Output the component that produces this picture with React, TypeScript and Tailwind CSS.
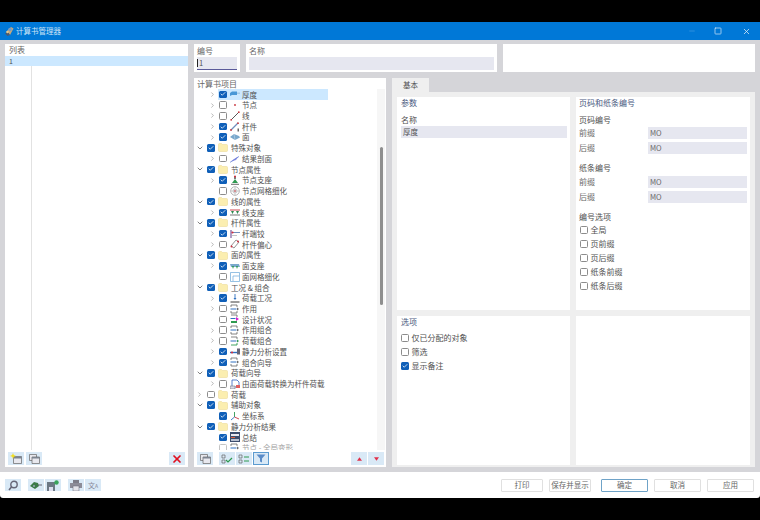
import React from 'react';
import { ChevronRight, ChevronDown, Check, Minus, Square, X } from 'lucide-react';

type TreeRow = { label: string; level: 0 | 1; arrow?: 'right' | 'down'; checked?: boolean; icon?: string; selected?: boolean; faded?: boolean };

const rows: TreeRow[] = [
    { label: '厚度', level: 1, arrow: 'right', checked: true, icon: 'thickness', selected: true },
    { label: '节点', level: 1, arrow: 'right', icon: 'node' },
    { label: '线', level: 1, arrow: 'right', icon: 'line' },
    { label: '杆件', level: 1, arrow: 'right', checked: true, icon: 'member' },
    { label: '面', level: 1, arrow: 'right', checked: true, icon: 'surface' },
    { label: '特殊对象', level: 0, arrow: 'down', checked: true },
    { label: '结果剖面', level: 1, arrow: 'right', icon: 'section' },
    { label: '节点属性', level: 0, arrow: 'down', checked: true },
    { label: '节点支座', level: 1, arrow: 'right', checked: true, icon: 'support' },
    { label: '节点网格细化', level: 1, icon: 'mesh' },
    { label: '线的属性', level: 0, arrow: 'down', checked: true },
    { label: '线支座', level: 1, arrow: 'right', checked: true, icon: 'lineSupport' },
    { label: '杆件属性', level: 0, arrow: 'down', checked: true },
    { label: '杆端铰', level: 1, arrow: 'right', checked: true, icon: 'hinge' },
    { label: '杆件偏心', level: 1, arrow: 'right', icon: 'eccentric' },
    { label: '面的属性', level: 0, arrow: 'down', checked: true },
    { label: '面支座', level: 1, arrow: 'right', checked: true, icon: 'surfaceSupport' },
    { label: '面网格细化', level: 1, icon: 'surfaceMesh' },
    { label: '工况 & 组合', level: 0, arrow: 'down', checked: true },
    { label: '荷载工况', level: 1, arrow: 'right', checked: true, icon: 'loadCase' },
    { label: '作用', level: 1, arrow: 'right', icon: 'action' },
    { label: '设计状况', level: 1, icon: 'design' },
    { label: '作用组合', level: 1, arrow: 'right', icon: 'action' },
    { label: '荷载组合', level: 1, arrow: 'right', icon: 'combo' },
    { label: '静力分析设置', level: 1, arrow: 'right', checked: true, icon: 'static' },
    { label: '组合向导', level: 1, arrow: 'right', checked: true, icon: 'action' },
    { label: '荷载向导', level: 0, arrow: 'down', checked: true },
    { label: '由面荷载转换为杆件荷载', level: 1, arrow: 'right', icon: 'convert' },
    { label: '荷载', level: 0, arrow: 'right' },
    { label: '辅助对象', level: 0, arrow: 'down', checked: true },
    { label: '坐标系', level: 1, checked: true, icon: 'axes' },
    { label: '静力分析结果', level: 0, arrow: 'down', checked: true },
    { label: '总结', level: 1, checked: true, icon: 'summary' },
    { label: '节点 - 全局变形', level: 1, icon: 'action', faded: true },
];

const TreeIcon: React.FC<{ name?: string }> = ({ name }) => {
    const common = { width: 10, height: 10, viewBox: '0 0 10 10', fill: 'none' };
    switch (name) {
        case 'thickness':
            return <svg {...common}><path d="M0 4l2-1.500h5v3.500H2L0 7z" fill="#4a97d6" /><path d="M7 3.500h3v1.500H7z" fill="#a8cce8" /></svg>;
        case 'node':
            return <svg {...common}><circle cx="5" cy="5" r="0.900" fill="#c8323c" /></svg>;
        case 'line':
            return <svg {...common}><path d="M1 9l8-8" stroke="#444" strokeWidth="0.900" /><circle cx="1.200" cy="8.800" r="0.900" fill="#c8323c" /><circle cx="8.800" cy="1.200" r="0.900" fill="#c8323c" /></svg>;
        case 'member':
            return <svg {...common}><path d="M1 8l7-7" stroke="#6f8fbc" strokeWidth="1.300" /><circle cx="1" cy="8" r="0.900" fill="#c8323c" /><circle cx="8" cy="1.200" r="0.900" fill="#c8323c" /><path d="M7.500 6.500h1.500v3H7.500z" fill="#666" /></svg>;
        case 'surface':
            return <svg {...common}><path d="M0 5l4-3 5 2 1 1.500-5 2.500z" fill="#7aa8cc" /><path d="M4 2l1 6" stroke="#c0d8ea" strokeWidth="0.600" /></svg>;
        case 'section':
            return <svg {...common}><path d="M0 8l4-3 5-3-3 4z" fill="#8f8fe8" /><path d="M0 8.500l9-6" stroke="#5f7fd0" strokeWidth="0.600" /></svg>;
        case 'support':
            return <svg {...common}><path d="M5 1v3" stroke="#444" strokeWidth="1.400" /><circle cx="5" cy="1.500" r="1" fill="#d03040" /><path d="M2 8l3-4 3 4z" fill="#2e9a50" /><path d="M1 9.300h8" stroke="#444" strokeWidth="0.800" /></svg>;
        case 'mesh':
            return <svg {...common}><circle cx="5" cy="5" r="4.300" stroke="#999" strokeWidth="0.700" /><circle cx="5" cy="5" r="2" stroke="#aaa" strokeWidth="0.600" /><path d="M0.700 5h8.600M5 0.700v8.600" stroke="#aaa" strokeWidth="0.500" /><circle cx="5" cy="5" r="0.800" fill="#c8323c" /></svg>;
        case 'lineSupport':
            return <svg {...common}><path d="M0 3h10" stroke="#c8323c" strokeWidth="0.900" /><path d="M1 4l1.500 3L4 4zM6 4l1.500 3L9 4z" fill="#2e8a50" /><path d="M0 8h10" stroke="#555" strokeWidth="0.800" /></svg>;
        case 'hinge':
            return <svg {...common}><path d="M1 1v8" stroke="#7a5ca0" strokeWidth="1.200" /><path d="M2 3.500h8" stroke="#6f8fbc" strokeWidth="1" /><circle cx="2.500" cy="3.500" r="1.100" fill="#d03040" /><path d="M2 6.500h5" stroke="#aaa" strokeWidth="0.700" /></svg>;
        case 'eccentric':
            return <svg {...common}><path d="M1 7l5-6 3 2-5 6z" stroke="#777" strokeWidth="0.800" /><circle cx="1.500" cy="7.500" r="1" fill="#d03040" /><circle cx="8" cy="2.500" r="1" fill="#d03040" /></svg>;
        case 'surfaceSupport':
            return <svg {...common}><path d="M0 3h9l1 3H1z" fill="#7aa8cc" /><path d="M2 5l1 3 1-3zM6 5l1 3 1-3z" fill="#2e9a50" /></svg>;
        case 'surfaceMesh':
            return <svg {...common}><path d="M0.500 0.500h9v9h-9z" stroke="#6aa8d8" strokeWidth="0.700" /><path d="M3 9V4h6" stroke="#6aa8d8" strokeWidth="0.700" /></svg>;
        case 'loadCase':
            return <svg {...common}><path d="M5 1v5" stroke="#3070c0" strokeWidth="0.900" /><path d="M3.500 5L5 7l1.500-2z" fill="#3070c0" /><path d="M0.500 9h9" stroke="#222" strokeWidth="0.900" /></svg>;
        case 'action':
            return <svg {...common}><path d="M1 1h6v2M7 7v2H1" stroke="#666" strokeWidth="0.800" /><path d="M1 1v2M1 7v2" stroke="#666" strokeWidth="0.800" /><path d="M7 3.500l2 1.500-2 1.500z" fill="#666" /><path d="M0.500 5h6" stroke="#3070c0" strokeWidth="1" /></svg>;
        case 'design':
            return <svg {...common}><path d="M1 1h6v2" stroke="#666" strokeWidth="0.800" /><path d="M1 7h6v2H1z" fill="#2e9a50" /><path d="M6 3l3 2-3 2z" fill="#d820d0" /><path d="M0.500 4.500h5" stroke="#3070c0" strokeWidth="1" /></svg>;
        case 'combo':
            return <svg {...common}><path d="M1 1h6v2" stroke="#666" strokeWidth="0.800" /><path d="M1 9h6V7" stroke="#2e9a50" strokeWidth="0.900" /><path d="M7 3.500l2 1.500-2 1.500z" fill="#2e9a50" /><path d="M0.500 5h6" stroke="#3070c0" strokeWidth="1" /></svg>;
        case 'static':
            return <svg {...common}><path d="M0 5.500h7" stroke="#3070c0" strokeWidth="1.400" /><circle cx="2" cy="5.500" r="1.100" fill="#d03040" /><path d="M7 1.500h3v6H7z" fill="#667" /></svg>;
        case 'convert':
            return <svg {...common}><path d="M2 1h5l2 2v5H2z" stroke="#3060c0" strokeWidth="0.800" /><path d="M0 7h5v3H0z" fill="#d8d8e8" stroke="#666" strokeWidth="0.500" /><path d="M6 6h4v3H6z" fill="#e06060" /></svg>;
        case 'axes':
            return <svg {...common}><path d="M4.500 6V1" stroke="#2e9a50" strokeWidth="0.900" /><path d="M4.500 6L9 8" stroke="#d03040" strokeWidth="0.900" /><path d="M4.500 6L1 9" stroke="#3070c0" strokeWidth="0.900" /></svg>;
        case 'summary':
            return <svg {...common}><path d="M0 0h10v10H0z" fill="#3c4c6c" /><path d="M1 2h8v2H1z" fill="#e8e8f0" /><path d="M1 5h4v1H1z" fill="#e06040" /><path d="M1 7h8v2H1z" fill="#b8c0d0" /></svg>;
        default:
            return <span className="w-[10px]" />;
    }
};

const Folder = () => (
    <svg width="10" height="9" viewBox="0 0 10 9"><path d="M0.500 1.500a1 1 0 0 1 1-1h2l1 1h4a1 1 0 0 1 1 1v5a1 1 0 0 1-1 1h-7a1 1 0 0 1-1-1z" fill="#fbeeb0" stroke="#e8d68c" strokeWidth="0.500" /></svg>
);

const CheckBox: React.FC<{ checked?: boolean; faded?: boolean }> = ({ checked, faded }) =>
    checked ? (
        <span className="w-[7.500px] h-[7.500px] rounded-[1.500px] bg-[#0f5fb8] flex items-center justify-center shrink-0">
            <Check size={6} color="#fff" strokeWidth={3} />
        </span>
    ) : (
        <span className={`w-[7.500px] h-[7.500px] rounded-[1.500px] border bg-white shrink-0 ${faded ? 'border-[#c4c4c4]' : 'border-[#8c8c8c]'}`} />
    );

const Row: React.FC<{ row: TreeRow }> = ({ row }) => (
    <div className={`h-[10.73px] flex items-center ${row.level === 0 ? 'pl-[1px]' : 'pl-[13.500px]'} ${row.faded ? 'text-[#a0a0a0]' : ''}`}>
        <span className="w-[9px] shrink-0 flex justify-center">
            {row.arrow === 'right' && <ChevronRight size={7} color="#888" strokeWidth={2} />}
            {row.arrow === 'down' && <ChevronDown size={8} color="#444" strokeWidth={2} />}
        </span>
        <span className={`flex items-center h-full ${row.selected ? 'bg-[#cce8ff] w-[110px]' : ''} ${row.level === 0 ? 'ml-[2px]' : 'ml-[1.500px]'}`}>
            <span className="w-[10px] flex justify-center shrink-0"><CheckBox checked={row.checked} faded={row.faded} /></span>
            <span className="w-[13px] flex justify-center shrink-0">{row.level === 0 ? <Folder /> : <TreeIcon name={row.icon} />}</span>
            <span className={`whitespace-nowrap leading-none ${row.level === 0 ? 'ml-[2px]' : 'ml-[1px]'}`}>{row.label}</span>
        </span>
    </div>
);

const ToolButton: React.FC<{ children: React.ReactNode; active?: boolean }> = ({ children, active }) => (
    <span className={`w-[16px] h-[12.500px] bg-[#d9e9f6] flex items-center justify-center shrink-0 ${active ? 'border border-[#5b9bd0]' : ''}`}>{children}</span>
);

const Windows = () => (
    <svg width="11" height="10" viewBox="0 0 11 10" fill="none"><path d="M0.500 0.500h7v6h-7z" fill="#e8e8ee" stroke="#666" strokeWidth="0.700" /><path d="M3 3h7.500v6.500H3z" fill="#e8e8ee" stroke="#666" strokeWidth="0.700" /><path d="M3 3h7.500v1.500H3z" fill="#7c8490" /></svg>
);

const Field: React.FC<{ value: string }> = ({ value }) => (
    <div className="h-[12px] w-[99px] bg-[#e6e7f0] flex items-center pl-[2px] text-[7.500px] text-[#666]">{value}</div>
);

const Option: React.FC<{ label: string; checked?: boolean }> = ({ label, checked }) => (
    <div className="h-[14px] flex items-center gap-[3px]">
        <CheckBox checked={checked} />
        <span className="leading-none">{label}</span>
    </div>
);

const FooterButton: React.FC<{ label: string; primary?: boolean; wide?: boolean }> = ({ label, primary, wide }) => (
    <span className={`h-[13px] bg-white flex items-center justify-center text-[7.500px] text-[#666] rounded-[1px] border ${wide ? 'w-[47px]' : 'w-[42px]'} ${primary ? 'border-[#6fa3c8]' : 'border-[#e0e0e0]'}`}>{label}</span>
);

const App: React.FC = () => {
    return (
        <div className="w-[760px] h-[520px] bg-black pt-[22px] text-[8px] text-[#505050] overflow-hidden" style={{ fontFamily: '"Noto Sans CJK SC", "Noto Sans", sans-serif' }}>
            <div className="h-[476px] flex flex-col bg-white rounded-b-[3px] overflow-hidden">
                {/* title bar */}
                <div className="h-[18px] bg-[#0078d7] flex items-center pl-[5px] shrink-0">
                    <svg width="9" height="10" viewBox="0 0 9 10"><path d="M1 6l5-5 2.500 1.500L5 9z" fill="#c8a878" /><path d="M0 7.500L3 6l2 3-2.500 1z" fill="#4a5a70" /><circle cx="5" cy="3.500" r="1.800" fill="#7c9cc0" /><circle cx="2.500" cy="6" r="1.200" fill="#e0c890" /></svg>
                    <span className="ml-[2px] text-[#cfe4f6] text-[7.500px]">计算书管理器</span>
                    <span className="ml-auto flex items-center text-[#a8d0f0]">
                        <Minus size={8} className="mr-[18px] opacity-40" />
                        <Square size={8} color="#e0effa" strokeWidth={2} className="mr-[20px]" />
                        <X size={9} color="#e0effa" className="mr-[9px]" />
                    </span>
                </div>

                {/* body */}
                <div className="h-[432px] bg-[#d5d5d9] flex gap-[6px] pl-[5px] pr-[5px] pt-[4px] pb-[5px] shrink-0">
                    {/* list */}
                    <div className="w-[183px] bg-white flex flex-col">
                        <div className="h-[12px] pl-[4px] flex items-center text-[#666]">列表</div>
                        <div className="h-[10px] bg-[#cce8ff] pl-[4px] flex items-center leading-none text-[7px]">1</div>
                        <div className="flex-1 ml-[26px] border-l border-[#e2e2e2]" />
                        <div className="h-[17px] flex items-center pl-[3px] pr-[3px] gap-[2px]">
                            <ToolButton>
                                <svg width="12" height="11" viewBox="0 0 12 11" fill="none"><path d="M3.500 3.500h8V10.500h-8z" fill="#e8e8ee" stroke="#666" strokeWidth="0.700" /><path d="M3.500 3.500h8v2h-8z" fill="#7c8490" /><path d="M3 0l.8 2L6 3l-2.200.8L3 6l-.8-2.200L0 3l2.200-1z" fill="#f4e020" /></svg>
                            </ToolButton>
                            <ToolButton><Windows /></ToolButton>
                            <span className="ml-auto">
                                <ToolButton><X size={12} color="#e01020" strokeWidth={3.500} /></ToolButton>
                            </span>
                        </div>
                    </div>

                    {/* right side */}
                    <div className="flex-1 flex flex-col gap-[6px] min-w-0">
                        <div className="h-[28px] flex gap-[6px] shrink-0">
                            <div className="w-[46px] bg-white px-[3px] pt-[1px]">
                                <div className="h-[11px] flex items-center text-[#666]">编号</div>
                                <div className="h-[13px] mt-[1px] bg-[#e6e7f0] border-b border-[#5a5a9a] flex items-center text-[7.500px] leading-none"><span className="border-l border-[#222] pl-[1px]">1</span></div>
                            </div>
                            <div className="w-[251px] bg-white px-[3px] pt-[1px]">
                                <div className="h-[11px] flex items-center text-[#666]">名称</div>
                                <div className="h-[13px] mt-[1px] bg-[#e6e7f0]" />
                            </div>
                            <div className="flex-1 bg-white" />
                        </div>

                        <div className="flex-1 flex gap-[6px] min-h-0">
                            {/* tree */}
                            <div className="w-[192px] bg-white flex flex-col shrink-0">
                                <div className="h-[11px] pl-[3px] flex items-center text-[#666] shrink-0">计算书项目</div>
                                <div className="flex-1 flex min-h-0">
                                    <div className="flex-1 overflow-hidden text-[7.500px]">
                                        {rows.map(row => <Row key={row.label} row={row} />)}
                                    </div>
                                    <div className="w-[8px] mr-[1px] bg-[#f6f6f6] flex justify-center shrink-0">
                                        <div className="w-[3px] h-[158px] mt-[58px] bg-[#8e8e8e] rounded-full" />
                                    </div>
                                </div>
                                <div className="h-[17px] flex items-center pl-[3px] pr-[2px] gap-[1px] shrink-0">
                                    <ToolButton><Windows /></ToolButton>
                                    <span className="w-[4px]" />
                                    <ToolButton>
                                        <svg width="12" height="10" viewBox="0 0 12 10" fill="none"><path d="M1 1h3v3H1zM1 6h3v3H1z" stroke="#666" strokeWidth="0.700" /><path d="M5 6l2 2 4-4" stroke="#2e9a50" strokeWidth="1.200" /></svg>
                                    </ToolButton>
                                    <ToolButton>
                                        <svg width="12" height="10" viewBox="0 0 12 10" fill="none"><path d="M1 1h3v3H1zM1 6h3v3H1z" stroke="#666" strokeWidth="0.700" /><path d="M6 3h5M6 7h5" stroke="#2e9a50" strokeWidth="1" /></svg>
                                    </ToolButton>
                                    <ToolButton active>
                                        <svg width="10" height="9" viewBox="0 0 10 9"><path d="M0.500 0.500h9L6 4.500V8.500L4 7.500V4.500z" fill="#5a8cc8" /></svg>
                                    </ToolButton>
                                    <span className="ml-auto flex gap-[1px]">
                                        <ToolButton><svg width="5" height="4" viewBox="0 0 7 5"><path d="M3.500 0L7 5H0z" fill="#e0304a" /></svg></ToolButton>
                                        <ToolButton><svg width="5" height="4" viewBox="0 0 7 5"><path d="M0 0h7L3.500 5z" fill="#e0304a" /></svg></ToolButton>
                                    </span>
                                </div>
                            </div>

                            {/* tab area */}
                            <div className="flex-1 flex flex-col min-w-0">
                                <div className="h-[14px] w-[37px] bg-[#efefef] flex items-center justify-center text-[7.500px] shrink-0">基本</div>
                                <div className="flex-1 bg-[#efefef] grid grid-cols-[173px_174px] grid-rows-[213px_149px] gap-[6px] pt-[5px] pl-[5px] min-h-0">
                                    <div className="bg-white px-[4px]">
                                        <div className="h-[11px] flex items-center text-[#4a5a80]">参数</div>
                                        <div className="h-[11px] mt-[6px] flex items-center">名称</div>
                                        <div className="h-[12px] mt-[1px] bg-[#e6e7f0] flex items-center pl-[2px] mr-[-1px] text-[7.500px]">厚度</div>
                                    </div>
                                    <div className="bg-white px-[3px]">
                                        <div className="h-[11px] flex items-center text-[#4a5a80]">页码和纸条编号</div>
                                        <div className="h-[11px] mt-[6px] flex items-center">页码编号</div>
                                        <div className="h-[15px] flex items-center justify-between text-[#666]"><span>前缀</span><Field value="MO" /></div>
                                        <div className="h-[15px] flex items-center justify-between text-[#666]"><span>后缀</span><Field value="MO" /></div>
                                        <div className="h-[11px] mt-[7px] flex items-center">纸条编号</div>
                                        <div className="h-[15px] mt-[1px] flex items-center justify-between text-[#666]"><span>前缀</span><Field value="MO" /></div>
                                        <div className="h-[15px] flex items-center justify-between text-[#666]"><span>后缀</span><Field value="MO" /></div>
                                        <div className="h-[11px] mt-[7px] mb-[1px] flex items-center">编号选项</div>
                                        <div className="ml-[1px]">
                                            <Option label="全局" />
                                            <Option label="页前缀" />
                                            <Option label="页后缀" />
                                            <Option label="纸条前缀" />
                                            <Option label="纸条后缀" />
                                        </div>
                                    </div>
                                    <div className="bg-white px-[4px]">
                                        <div className="h-[11px] flex items-center text-[#4a5a80]">选项</div>
                                        <div className="mt-[4px]">
                                            <Option label="仅已分配的对象" />
                                            <Option label="筛选" />
                                            <Option label="显示备注" checked />
                                        </div>
                                    </div>
                                    <div className="bg-white" />
                                </div>
                            </div>
                        </div>
                    </div>
                </div>

                {/* footer */}
                <div className="flex-1 flex items-center pl-[5px] pr-[6px]">
                    <div className="flex items-center gap-[1px]">
                        <ToolButton>
                            <svg width="11" height="11" viewBox="0 0 11 11" fill="none"><circle cx="6" cy="4.500" r="3.200" stroke="#667" strokeWidth="1.400" /><path d="M3.500 7L1 10" stroke="#667" strokeWidth="1.600" /></svg>
                        </ToolButton>
                        <span className="w-[5px]" />
                        <ToolButton>
                            <svg width="12" height="9" viewBox="0 0 12 9"><path d="M0 5l4-4 4 1 1 3-4 3z" fill="#3a7a48" /><path d="M8 4h4" stroke="#667" strokeWidth="1" /><circle cx="4" cy="5" r="1" fill="#9ab" /></svg>
                        </ToolButton>
                        <ToolButton>
                            <svg width="12" height="11" viewBox="0 0 12 11"><path d="M0 2h8v9H0z" fill="#6c7884" /><path d="M2 7h4v4H2z" fill="#dde" /><circle cx="9.500" cy="2.500" r="2.200" fill="#3aa45c" /></svg>
                        </ToolButton>
                        <span className="w-[5px]" />
                        <ToolButton>
                            <svg width="12" height="11" viewBox="0 0 12 11"><path d="M3 0h6v3H3z" fill="#7c7c88" /><path d="M0 3h12v5H0z" fill="#8c8c98" /><path d="M3 6h6v5H3z" fill="#e4e4ea" stroke="#667" strokeWidth="0.500" /></svg>
                        </ToolButton>
                        <ToolButton>
                            <span className="text-[7px] text-[#889] leading-none">文<span className="text-[5px]">A</span></span>
                        </ToolButton>
                    </div>
                    <div className="ml-auto flex items-center">
                        <span className="flex gap-[6px]">
                            <FooterButton label="打印" />
                            <FooterButton label="保存并显示" />
                        </span>
                        <span className="flex gap-[6px] ml-[10px]">
                            <FooterButton label="确定" primary wide />
                            <FooterButton label="取消" wide />
                            <FooterButton label="应用" wide />
                        </span>
                    </div>
                </div>
            </div>
        </div>
    );
};

export default App;
